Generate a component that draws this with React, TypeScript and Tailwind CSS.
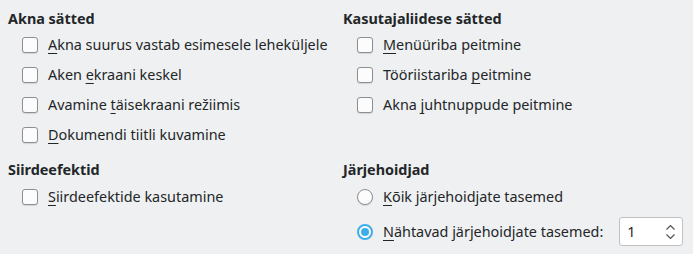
import React from "react";

type Label = { before: string; key: string; after: string };

function Mnemonic({ label }: { label: Label }) {
  return (
    <span>
      {label.before}
      <span className="underline decoration-1 underline-offset-[3px]">{label.key}</span>
      {label.after}
    </span>
  );
}

function CheckRow({ label }: { label: Label }) {
  return (
    <label className="flex h-[30px] items-center gap-[10px] pl-[14px]">
      <span className="h-4 w-4 shrink-0 rounded-[3px] border border-[#8e8f90] bg-[#fcfcfc] shadow-[0_1px_1px_rgba(0,0,0,0.12)]" />
      <Mnemonic label={label} />
    </label>
  );
}

function Radio({ checked }: { checked?: boolean }) {
  if (checked) {
    return (
      <span className="flex h-4 w-4 shrink-0 items-center justify-center rounded-full border-2 border-[#3daee9] bg-white">
        <span className="h-[8px] w-[8px] rounded-full bg-[#3daee9]" />
      </span>
    );
  }
  return (
    <span className="h-4 w-4 shrink-0 rounded-full border border-[#8e8f90] bg-[#fcfcfc] shadow-[0_1px_1px_rgba(0,0,0,0.12)]" />
  );
}

function Header({ children }: { children: React.ReactNode }) {
  return <div className="h-5 font-bold leading-5">{children}</div>;
}

const windowOpts: Label[] = [
  { before: "", key: "A", after: "kna suurus vastab esimesele leheküljele" },
  { before: "Aken ", key: "e", after: "kraani keskel" },
  { before: "Avamine ", key: "t", after: "äisekraani režiimis" },
  { before: "", key: "D", after: "okumendi tiitli kuvamine" },
];

const uiOpts: Label[] = [
  { before: "", key: "M", after: "enüüriba peitmine" },
  { before: "Tööriistariba ", key: "p", after: "eitmine" },
  { before: "Akna ", key: "j", after: "uhtnuppude peitmine" },
];

export default function App() {
  return (
    <div
      className="h-[254px] w-[693px] bg-[#eff0f1] pl-2 pt-[9px] text-[14.4px] leading-5 text-[#232629]"
      style={{ fontFamily: '"Noto Sans", sans-serif' }}
    >
      <div className="grid grid-cols-[335px_1fr] gap-y-[10px]">
        <div className="flex flex-col gap-[1px]">
          <Header>Akna sätted</Header>
          <div className="flex flex-col">
            {windowOpts.map((o, i) => (
              <CheckRow key={i} label={o} />
            ))}
          </div>
        </div>
        <div className="flex flex-col gap-[1px]">
          <Header>Kasutajaliidese sätted</Header>
          <div className="flex flex-col">
            {uiOpts.map((o, i) => (
              <CheckRow key={i} label={o} />
            ))}
          </div>
        </div>
        <div className="flex flex-col gap-[2px]">
          <Header>Siirdeefektid</Header>
          <CheckRow label={{ before: "", key: "S", after: "iirdeefektide kasutamine" }} />
        </div>
        <div className="flex flex-col gap-[2px]">
          <Header>Järjehoidjad</Header>
          <label className="flex h-[30px] items-center gap-[10px] pl-[14px]">
            <Radio />
            <Mnemonic label={{ before: "", key: "K", after: "õik järjehoidjate tasemed" }} />
          </label>
          <div className="flex h-[35px] items-center pl-[14px]">
            <label className="flex items-center gap-[10px]">
              <Radio checked />
              <Mnemonic label={{ before: "", key: "N", after: "ähtavad järjehoidjate tasemed:" }} />
            </label>
            <div className="ml-4 flex h-[29px] w-16 items-center justify-between rounded-[3px] border border-[#bfc1c2] bg-white pl-[7px] pr-[6px]">
              <span>1</span>
              <svg width="11" height="20" viewBox="0 0 11 20" fill="none" stroke="#4d4f51" strokeWidth="1.1">
                <path d="M1.5 7.5 L5.5 3.5 L9.5 7.5" />
                <path d="M1.5 12.5 L5.5 16.5 L9.5 12.5" />
              </svg>
            </div>
          </div>
        </div>
      </div>
    </div>
  );
}
